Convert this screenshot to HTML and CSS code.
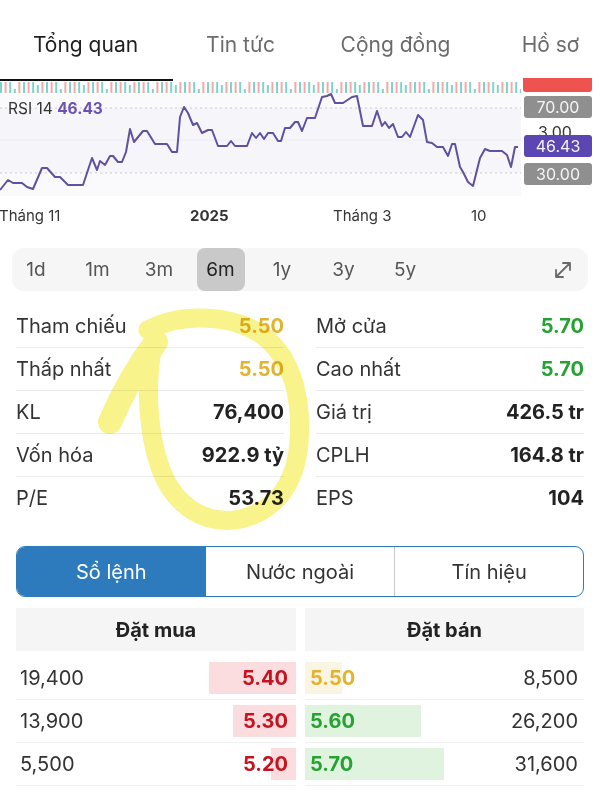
FILE: index.html
```html
<!DOCTYPE html>
<html lang="vi">
<head>
  <meta charset="UTF-8" />
  <meta name="viewport" content="width=device-width, initial-scale=1" />
  <title>Tổng quan</title>
  <link rel="stylesheet" href="styles.css">
</head>
<body>
  <nav class="tabs">
    <a class="tab active">Tổng quan</a>
    <a class="tab">Tin tức</a>
    <a class="tab">Cộng đồng</a>
    <a class="tab">Hồ sơ</a>
  </nav>

  <svg class="chart" width="600" height="152" viewBox="0 78 600 152">
    <defs>
      <pattern id="vol" x="0" y="82" width="46" height="12" patternUnits="userSpaceOnUse">
        <rect x="0" y="0" width="2" height="11" fill="#7fd3cb" />
        <rect x="4.6" y="0" width="2" height="11" fill="#f2a9a9" />
        <rect x="9.2" y="0" width="2" height="11" fill="#7fd3cb" />
        <rect x="13.8" y="7" width="2" height="4" fill="#7fd3cb" />
        <rect x="18.4" y="0" width="2" height="11" fill="#f2a9a9" />
        <rect x="23" y="0" width="2" height="11" fill="#7fd3cb" />
        <rect x="27.6" y="0" width="2" height="11" fill="#f2a9a9" />
        <rect x="32.2" y="0" width="2" height="11" fill="#7fd3cb" />
        <rect x="36.8" y="3" width="2" height="8" fill="#7fd3cb" />
        <rect x="41.4" y="0" width="2" height="11" fill="#f2a9a9" />
      </pattern>
    </defs>

    <!-- volume strip -->
    <rect x="0" y="82" width="521" height="12" fill="url(#vol)" />
    <rect x="0" y="79" width="173" height="2" fill="#111" />
    <rect x="523" y="76" width="69" height="16" rx="3" fill="#ef5350" />

    <!-- rsi pane -->
    <rect x="0" y="95" width="521" height="101" fill="#fafafd" />
    <rect x="0" y="108" width="521" height="65" fill="#f5f5fa" />
    <line x1="0" y1="140" x2="521" y2="140" stroke="#ececf3" stroke-width="1" />
    <line x1="0" y1="108" x2="521" y2="108" stroke="#c9c9d2" stroke-width="1" stroke-dasharray="2 3" />
    <line x1="0" y1="173" x2="521" y2="173" stroke="#c9c9d2" stroke-width="1" stroke-dasharray="2 3" />
    <polyline class="rsi-line" points="0,190 8,180 13,183 22,183 27,187 33,189 42,168 47,168 55,177 60,177 68,185 83,185 92,158 97,170 100,161 105,165 110,156 113,156 118,162 122,162 126,152 130,129 134,142 143,131 147,131 155,144 167,144 172,152 177,152 180,117 184,107 188,113 193,125 197,123 202,133 208,130 212,130 218,146 227,146 231,141 235,146 247,146 252,133 256,138 260,133 264,139 268,133 273,133 278,141 281,141 285,128 290,128 295,122 298,122 302,131 307,118 315,118 322,97 327,96 331,94 335,103 343,103 352,97 357,96 363,126 372,126 377,111 382,126 385,122 389,128 393,124 398,137 402,137 406,132 410,137 418,115 423,120 427,142 432,143 437,147 443,147 448,156 452,144 455,144 460,167 463,172 468,182 473,186 480,158 485,149 490,151 502,151 507,155 511,167 515,147 518,147" />
    <text class="rsi-label" x="8" y="114">RSI 14 <tspan class="rsi-value">46.43</tspan></text>

    <!-- price scale -->
    <rect x="524" y="96" width="68" height="22" rx="3" fill="#8f8f8f" />
    <text class="scale-text" x="558" y="113">70.00</text>
    <text class="scale-dark" x="555" y="138">3.00</text>
    <rect x="524" y="135" width="68" height="22" rx="3" fill="#5c46b4" />
    <text class="scale-text" x="558" y="152">46.43</text>
    <rect x="524" y="163" width="68" height="22" rx="3" fill="#8f8f8f" />
    <text class="scale-text" x="558" y="180">30.00</text>

    <!-- time axis -->
    <text class="axis" x="-1" y="221">Tháng 11</text>
    <text class="axis bold" x="190" y="221">2025</text>
    <text class="axis" x="333" y="221">Tháng 3</text>
    <text class="axis" x="471" y="221">10</text>
  </svg>

  <div class="periods">
    <span class="period">1d</span>
    <span class="period">1m</span>
    <span class="period">3m</span>
    <span class="period selected">6m</span>
    <span class="period">1y</span>
    <span class="period">3y</span>
    <span class="period">5y</span>
    <span class="expand">
      <svg width="22" height="22" viewBox="0 0 22 22">
        <path d="M4 18 L18 4 M11 4 H18 V11 M4 11 V18 H11" fill="none" stroke="#6a6a6a" stroke-width="1.8" stroke-linecap="round" stroke-linejoin="round" />
      </svg>
    </span>
  </div>

  <div class="stats">
    <div class="stat-col">
      <div class="stat"><span class="label">Tham chiếu</span><span class="value ref">5.50</span></div>
      <div class="stat"><span class="label">Thấp nhất</span><span class="value ref">5.50</span></div>
      <div class="stat"><span class="label">KL</span><span class="value">76,400</span></div>
      <div class="stat"><span class="label">Vốn hóa</span><span class="value">922.9 tỷ</span></div>
      <div class="stat"><span class="label">P/E</span><span class="value">53.73</span></div>
    </div>
    <div class="stat-col">
      <div class="stat"><span class="label">Mở cửa</span><span class="value up">5.70</span></div>
      <div class="stat"><span class="label">Cao nhất</span><span class="value up">5.70</span></div>
      <div class="stat"><span class="label">Giá trị</span><span class="value">426.5 tr</span></div>
      <div class="stat"><span class="label">CPLH</span><span class="value">164.8 tr</span></div>
      <div class="stat"><span class="label">EPS</span><span class="value">104</span></div>
    </div>
  </div>

  <div class="segment">
    <span class="seg active">Sổ lệnh</span>
    <span class="seg">Nước ngoài</span>
    <span class="seg divided">Tín hiệu</span>
  </div>

  <div class="book">
    <div class="book-side buy">
      <div class="book-head">Đặt mua</div>
      <div class="book-row" style="--depth: 87px"><span class="qty">19,400</span><span class="price down">5.40</span></div>
      <div class="book-row" style="--depth: 63px"><span class="qty">13,900</span><span class="price down">5.30</span></div>
      <div class="book-row" style="--depth: 25px"><span class="qty">5,500</span><span class="price down">5.20</span></div>
    </div>
    <div class="book-side sell">
      <div class="book-head">Đặt bán</div>
      <div class="book-row ref-row" style="--depth: 37px"><span class="price ref">5.50</span><span class="qty">8,500</span></div>
      <div class="book-row" style="--depth: 116px"><span class="price up">5.60</span><span class="qty">26,200</span></div>
      <div class="book-row" style="--depth: 139px"><span class="price up">5.70</span><span class="qty">31,600</span></div>
    </div>
  </div>

  <!-- hand drawn highlight over the stats -->
  <svg class="scribble" width="600" height="800" viewBox="0 0 600 800">
    <path d="M148 330 C182 312 236 314 266 338 C294 362 302 402 299 442 C296 482 277 510 241 519 C205 526 175 506 161 470 C147 432 146 385 152 350" fill="none" stroke="#f6f06e" stroke-width="19" stroke-linecap="round" />
    <path d="M110 422 C122 394 137 367 156 342" fill="none" stroke="#f6f06e" stroke-width="24" stroke-linecap="round" />
  </svg>
</body>
</html>
```

FILE: styles.css
```css
body {
  margin: 0;
  font-family: Inter, "Liberation Sans", Arial, sans-serif;
  background: #fff;
  color: #333;
  position: relative;
  overflow: hidden;
}
.tabs {
  display: grid;
  grid-template-columns: repeat(4, 155px);
  height: 78px;
  padding: 10px 0 0 8px;
  box-sizing: border-box;
  align-items: center;
  overflow: hidden;
}
.tab {
  text-align: center;
  font-size: 21px;
  color: #6b6b6b;
}
.tab.active {
  color: #1f1f1f;
}
.chart {
  display: block;
}
.chart text {
  font-family: Inter, "Liberation Sans", Arial, sans-serif;
}
.rsi-line {
  fill: none;
  stroke: #5f519f;
  stroke-width: 2;
  stroke-linejoin: round;
}
.rsi-label {
  font-size: 15.5px;
  fill: #333;
}
.rsi-value {
  font-weight: 700;
  fill: #6a52b6;
}
.scale-text {
  font-size: 16px;
  fill: #f4f4f4;
  text-anchor: middle;
}
.scale-dark {
  font-size: 16px;
  fill: #333;
  text-anchor: middle;
}
.axis {
  font-size: 15px;
  fill: #333;
}
.axis.bold {
  font-weight: 700;
}
.periods {
  display: flex;
  align-items: center;
  gap: 13.5px;
  height: 43px;
  margin: 18px 12px 0;
  background: #f6f6f6;
  border-radius: 12px;
}
.period {
  width: 48px;
  height: 43px;
  display: flex;
  align-items: center;
  justify-content: center;
  font-size: 19px;
  color: #555;
  border-radius: 8px;
}
.period.selected {
  background: #c9c9c9;
  color: #222;
}
.expand {
  margin-left: auto;
  margin-right: 14px;
  display: flex;
}
.stats {
  display: grid;
  grid-template-columns: 1fr 1fr;
  column-gap: 32px;
  margin-top: 14px;
  padding: 0 16px;
}
.stat {
  display: flex;
  justify-content: space-between;
  align-items: center;
  height: 42px;
  border-bottom: 1px solid #ececec;
  font-size: 20px;
}
.stat:last-child {
  border-bottom: none;
}
.label {
  color: #333;
}
.value {
  font-weight: 700;
  color: #222;
}
.ref {
  color: #e3b22e;
}
.up {
  color: #25a232;
}
.down {
  color: #c4141f;
}
.segment {
  display: grid;
  grid-template-columns: 1fr 1fr 1fr;
  height: 51px;
  margin: 27px 16px 0;
  border: 1.5px solid #2d7bbd;
  border-radius: 9px;
  box-sizing: border-box;
  overflow: hidden;
}
.seg {
  display: flex;
  align-items: center;
  justify-content: center;
  font-size: 20px;
  color: #333;
}
.seg.active {
  background: #2d7bbd;
  color: #fff;
}
.seg.divided {
  border-left: 1px solid #c8c8c8;
}
.book {
  display: grid;
  grid-template-columns: 280px 279px;
  column-gap: 9px;
  margin: 11px 16px 0;
}
.book-head {
  height: 43px;
  display: flex;
  align-items: center;
  justify-content: center;
  background: #f5f5f5;
  font-size: 20px;
  font-weight: 700;
  color: #222;
  margin-bottom: 6px;
}
.book-row {
  display: flex;
  justify-content: space-between;
  align-items: center;
  height: 42px;
  border-bottom: 1px solid #f0f0f0;
  font-size: 20px;
}
.buy .book-row {
  padding: 0 8px 0 4px;
  background: linear-gradient(#fbdde0, #fbdde0) right center / var(--depth) 32px no-repeat;
}
.sell .book-row {
  padding: 0 6px 0 5px;
  background: linear-gradient(#dff3df, #dff3df) left center / var(--depth) 32px no-repeat;
}
.sell .book-row.ref-row {
  background-image: linear-gradient(#faf5e2, #faf5e2);
}
.qty {
  color: #333;
}
.price {
  font-weight: 700;
}
.scribble {
  position: absolute;
  top: 0;
  left: 0;
  pointer-events: none;
  mix-blend-mode: multiply;
  opacity: 0.8;
}
```
